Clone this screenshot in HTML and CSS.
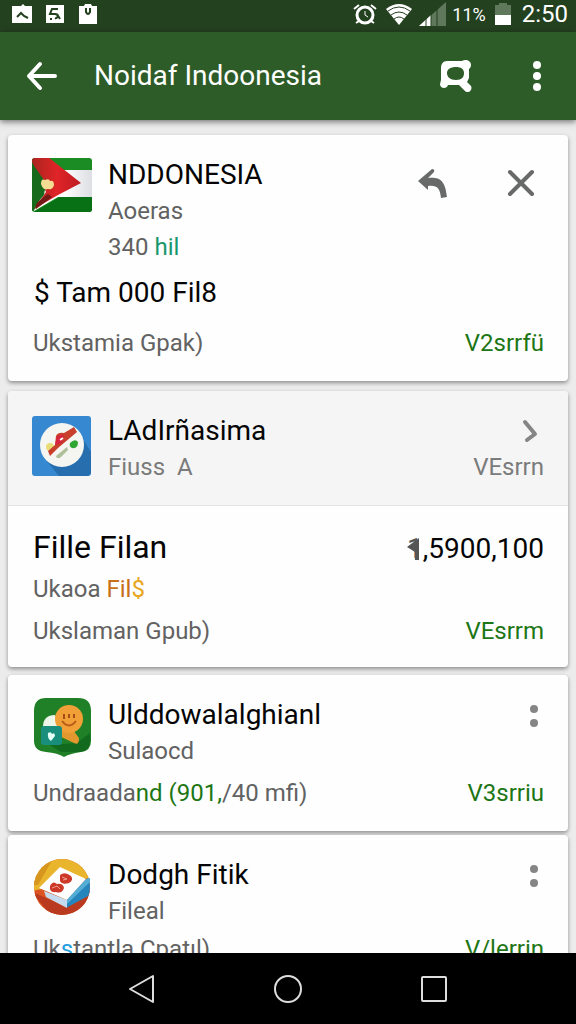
FILE: index.html
```
<!DOCTYPE html>
<html lang="id">
<head>
<meta charset="utf-8">
<meta name="viewport" content="width=device-width, initial-scale=1">
<title>Noidaf Indoonesia</title>
<link rel="stylesheet" href="styles.css">
</head>
<body>
<div class="status">
  <div class="status-group notices">
    <svg width="20" height="20" viewBox="0 0 20 20"><path fill="#fff" d="M0 2h9l2-2 2 2h7v17H0z"/><path d="M5 13l4-4 3 3 4 2" fill="none" stroke="#23401f" stroke-width="2"/></svg>
    <svg width="20" height="20" viewBox="0 0 20 20"><path fill="#fff" d="M1 1h18v18H1z"/><path d="M13 5H7L5 10h5c4 0 3 5 0 4M12 10l3 5M5 15h2" fill="none" stroke="#23401f" stroke-width="2"/></svg>
    <svg width="20" height="20" viewBox="0 0 20 20"><path fill="#fff" d="M1 2h5l1-2h6l1 2h5v18H1z"/><path d="M8 4v4q2 4 4 0V4" fill="none" stroke="#23401f" stroke-width="2"/></svg>
  </div>
  <div class="status-group">
    <svg class="alarm" width="24" height="22" viewBox="0 0 24 22"><g fill="none" stroke="#fff" stroke-width="2"><circle cx="12" cy="12" r="8" stroke-width="3"/><path d="M1 6l5-4M23 6l-5-4M6 18l-3 2M18 18l3 2"/><path d="M12 8v4l3 2" stroke-width="1"/></g></svg>
    <svg class="wifi" width="28" height="22" viewBox="0 0 28 22"><path fill="#fff" d="M14 22L1 6Q14-4 27 6z"/><path d="M3 8q11-8 22 0M6 12q8-6 16 0M9 16q5-4 10 0" fill="none" stroke="#23401f" stroke-width="1"/></svg>
    <svg class="signal" width="27" height="24" viewBox="0 0 27 24"><path fill="#5f785b" d="M27 0v24H0z"/><path fill="#fff" d="M12 13v11H0z"/><path d="M7 16v8M12 12v12M18 6v18" stroke="#23401f"/></svg>
    <span class="percent">11%</span>
    <svg class="battery" width="18" height="22" viewBox="0 0 18 22"><path fill="#5f785b" d="M1 2h4V0h8v2h4v10H1z"/><path fill="#fff" d="M1 12h16v10H1z"/></svg>
    <span class="clock">2:50</span>
  </div>
</div>
<header class="appbar">
  <button class="icon-button" aria-label="Back"><svg width="32" height="30" viewBox="0 0 32 30"><path d="M14 3L3 15l11 12M3 15h26" fill="none" stroke="#fff" stroke-width="4" stroke-linecap="round" stroke-linejoin="round"/></svg></button>
  <h1 class="title">Noidaf Indoonesia</h1>
  <button class="icon-button" aria-label="Search"><svg width="32" height="32" viewBox="0 0 32 32"><path fill="#fff" fill-rule="evenodd" d="M7 1h15c3-2 9-1 9 4 0 2-1 3-2 4v9l-2 4 4 4c2 4-3 8-6 5l-6-6H8c-1 4-8 4-8-1l1-4V8c0-4 2-7 6-7zM7 13c0 4 3 7 9 7s8-3 8-7-3-6-8-6-9 2-9 6z"/></svg></button>
  <button class="icon-button" aria-label="More options"><svg width="10" height="32" viewBox="0 0 10 32" fill="#fff"><circle cx="5" cy="5" r="4"/><circle cx="5" cy="16" r="4"/><circle cx="5" cy="27" r="4"/></svg></button>
</header>
<main class="list">
  <article class="card">
    <div class="head">
      <svg class="logo" width="60" height="60" viewBox="0 0 60 60">
        <defs><clipPath id="flag"><rect width="60" height="54" y="1" rx="3"/></clipPath><linearGradient id="red"><stop offset="0" stop-color="#a92520"/><stop offset=".5" stop-color="#e02427"/><stop offset="1" stop-color="#bd1b22"/></linearGradient><linearGradient id="white"><stop offset=".5" stop-color="#fff"/><stop offset="1" stop-color="#dcdde2"/></linearGradient></defs>
        <g clip-path="url(#flag)"><path fill="#1b8b23" d="M0 0h61v58H0z"/><path fill="url(#white)" d="M25 13h36v27H26L2 54v-4z"/><path fill="#176a1b" d="M0 0l5 7 1 42-6 6z"/><path fill="#087015" d="M2 55l26-15h33v18H0z"/><path fill="url(#red)" d="M0 0h16l33 26L26 38 2 52l12-17L0 5z"/><path fill="#741915" d="M4 46l12-9 4 3L4 52z"/><path fill="#176a1b" d="M0 6l14 20-2 12L0 52z"/><path fill="#f4dc93" d="M9 27q0-6 4-4 4-2 5 1 4-1 4 4-1 5-6 4-5 2-7-5z"/></g>
      </svg>
      <div class="names"><h2 class="name">NDDONESIA</h2><p class="sub">Aoeras</p><p class="sub">340 <span class="teal">hil</span></p></div>
      <div class="actions">
        <button class="icon-button" aria-label="Reply"><svg width="32" height="32" viewBox="0 0 32 32"><path fill="#686a69" d="M15 2q3 0 2 3l-6 6c11-1 17 1 19 19l-6 1c-1-10-4-13-13-12v4L1 14z"/></svg></button>
        <button class="icon-button" aria-label="Close"><svg width="28" height="28" viewBox="0 0 28 28"><path d="M3 3l22 22M25 3L3 25" stroke="#686a69" stroke-width="4" stroke-linecap="round"/></svg></button>
      </div>
    </div>
    <p class="amount lead">$ Tam 000 Fil8</p>
    <div class="row first"><span>Ukstamia Gpak)</span><a class="link" href="#">V2srrfü</a></div>
  </article>

  <article class="card second">
    <div class="head shaded">
      <svg class="logo" width="60" height="60" viewBox="0 0 60 60"><rect width="59" height="60" rx="3" fill="#3688d1"/><path fill="#266ead" d="M14 44l13 16h29l3-3V36L48 18z"/><circle cx="30" cy="29" r="22" fill="#f5f5f2"/><circle cx="18" cy="31" r="4" fill="#eadc77"/><path fill="#c8402b" d="M24 20q2-4 8-3l10-6 3 5-19 16-8 8-2-5 7-6z"/><path fill="#d8233e" d="M25 20l7-1-2 8-7 2z"/><path d="M28 24l3-2" stroke="#fff" stroke-width="2"/><path fill="#aebf9a" d="M35 31l-11 9q1 4 5 1l7-7z"/><path fill="#30a735" d="M38 27q5-5 8-1 0 7-6 6-3-1-2-5z"/></svg>
      <div class="names"><h2 class="name">LAdIrñasima</h2><p class="sub muted">Fiuss&nbsp; A</p></div>
      <div class="side"><button class="icon-button chevron" aria-label="Open"><svg width="18" height="26" viewBox="0 0 18 26"><path d="M4 4l10 12-8 6" fill="none" stroke="#858585" stroke-width="4" stroke-linecap="round" stroke-linejoin="round"/></svg></button><span class="muted">VEsrrn</span></div>
    </div>
    <div class="detail">
      <div class="row amount"><strong class="strong">Fille Filan</strong><span><span class="flagged">1<svg class="wedge" width="12" height="22" viewBox="0 0 12 22"><path fill="#555" d="M0 9L12 0v22H8v-8z"/></svg></span>,5900,100</span></div>
      <p class="row">Ukaoa&nbsp;<span class="orange">Fil<span class="gold">$</span></span></p>
      <div class="row last"><span>Ukslaman Gpub)</span><a class="link" href="#">VEsrrm</a></div>
    </div>
  </article>

  <article class="card third">
    <div class="head">
      <svg class="logo" width="60" height="60" viewBox="0 0 60 60"><path fill="#208027" d="M14 1h32q13 0 13 13v30q0 10-10 11-12 2-17 5-6-4-18-5Q2 54 2 44V14Q2 1 14 1z"/><path fill="#126a1e" d="M18 48l27-2 13-10v8q0 10-10 11H29z"/><path fill="#edf7e9" d="M11 30q0-12 12-12l6 14z"/><path fill="#e2982e" d="M28 30L41 33l6 8q0 8-5 5L27 39z"/><circle cx="37" cy="22" r="14" fill="#f0a036"/><path d="M32 17v5M37 17v4M42 17v4" stroke="#a44d16" stroke-width="2"/><path d="M30 24q7 9 14 0" stroke="#b95a19" stroke-width="2" fill="none"/><rect x="9" y="29" width="21" height="19" rx="3" fill="#198e7c"/><path fill="#e3fff7" d="M16 36q3-2 4 1 3-2 3 2l-4 5q-4-3-3-8z"/></svg>
      <div class="names"><h2 class="name">Ulddowalalghianl</h2><p class="sub">Sulaocd</p></div>
      <button class="icon-button dots" aria-label="Options"><svg width="10" height="24" viewBox="0 0 10 24" fill="#858585"><circle cx="5" cy="5" r="4"/><circle cx="5" cy="19" r="4"/></svg></button>
    </div>
    <div class="row spaced"><span>Undraada<span class="green">nd (901,</span>/40 mfi)</span><a class="link" href="#">V3srriu</a></div>
  </article>

  <article class="card fourth">
    <div class="head">
      <svg class="logo" width="60" height="60" viewBox="0 0 60 60"><defs><clipPath id="disc"><circle cx="30" cy="30" r="28"/></clipPath></defs><g clip-path="url(#disc)"><path fill="#dc5422" d="M0 0h60v60H0z"/><path fill="#e9b52c" d="M0 0h60v20l-30 8L0 34z"/><path fill="#d7961d" d="M0 0h22L6 28H0z"/><path fill="#b93a1e" d="M0 35l35 15 24-18v28H20z"/><path fill="#2785bd" d="M35 41l25-23v19L34 51z"/><path fill="#c5dcf0" d="M12 34l23 9v8L14 40z"/></g><path fill="#fff" d="M7 31L28 10l26 12-19 21z"/><path fill="#53add5" d="M35 43l19-21 4-1v4L35 47z"/><path fill="#cd3929" d="M28 18q5-4 11 1 3 4-2 7-7 2-9-2zM18 29q3-6 7-2 6-1 7 4-2 6-8 4-7 1-6-6z"/><path d="M30 20l5 2-4 1M20 31l5-2 3 3" fill="none" stroke="#f1a08f"/></svg>
      <div class="names"><h2 class="name">Dodgh Fitik</h2><p class="sub">Fileal</p></div>
      <button class="icon-button dots" aria-label="Options"><svg width="10" height="24" viewBox="0 0 10 24" fill="#858585"><circle cx="5" cy="5" r="4"/><circle cx="5" cy="19" r="4"/></svg></button>
    </div>
    <div class="row"><span>Uk<span class="blue">s</span>tantla Cpatıl)</span><a class="link" href="#">V/lerrin</a></div>
  </article>
</main>
<nav class="navbar" aria-label="System">
  <button class="icon-button" aria-label="Back"><svg width="32" height="32" viewBox="0 0 32 32"><path d="M27 3v26L4 16z" fill="none" stroke="#ddd" stroke-width="2" stroke-linejoin="round"/></svg></button>
  <button class="icon-button" aria-label="Home"><svg width="32" height="32" viewBox="0 0 32 32"><circle cx="16" cy="16" r="13" fill="none" stroke="#ddd" stroke-width="2"/></svg></button>
  <button class="icon-button" aria-label="Recent"><svg width="32" height="32" viewBox="0 0 32 32"><rect x="4" y="4" width="24" height="24" rx="1" fill="none" stroke="#ddd" stroke-width="2"/></svg></button>
</nav>
</body>
</html>
```
FILE: styles.css
```
* { box-sizing: border-box; }
body {
  margin: 0;
  height: 100vh;
  display: flex;
  flex-direction: column;
  background: #ececec;
  color: #626262;
  font-family: Roboto, "Noto Sans", sans-serif;
  font-size: 24px;
}
h1, h2, p { margin: 0; font-weight: 400; }
svg { display: block; flex: none; }
.icon-button { display: flex; padding: 0; border: 0; background: none; }
.status {
  display: flex;
  justify-content: space-between;
  flex: none;
  height: 32px;
  padding: 0 8px 4px 12px;
  background: #23401f;
  color: #fff;
}
.status-group { display: flex; align-items: center; gap: 6px; }
.notices { gap: 13px; }
.wifi, .battery { margin-left: 2px; }
.percent { font-size: 18px; }
.clock { margin-left: 4px; font-size: 24px; }
.appbar {
  display: flex;
  align-items: center;
  flex: none;
  height: 88px;
  padding: 0 34px 0 26px;
  background: #2d5c28;
  color: #fff;
  box-shadow: 0 2px 6px rgba(0, 0, 0, .5);
  z-index: 1;
}
.title { flex: 1; margin-left: 36px; font-size: 28px; line-height: 40px; }
.appbar .icon-button:last-child { margin-left: 60px; }
.list { flex: 1; min-height: 0; overflow: hidden; padding: 15px 8px 0; }
.card {
  border-radius: 4px;
  background: #fefefe;
  box-shadow: 0 2px 4px rgba(0, 0, 0, .4);
  padding-bottom: 16px;
}
.second { margin-top: 10px; }
.third { margin-top: 8px; padding-bottom: 18px; }
.fourth { margin-top: 4px; }
.head { display: flex; align-items: flex-start; gap: 16px; padding: 22px 24px 0; }
.shaded { padding-bottom: 20px; border-bottom: 1px solid #e4e4e4; border-radius: 4px 4px 0 0; background: #f5f5f5; }
.second .logo { margin-top: 3px; }
.names { flex: 1; min-width: 0; }
.name { color: #050505; font-size: 28px; line-height: 36px; white-space: nowrap; }
.sub { line-height: 36px; }
.muted { color: #7b7b7b; }
.teal { color: #16976c; }
.actions { display: flex; align-items: center; gap: 58px; padding: 10px 9px 0 0; }
.amount { color: #050505; font-size: 28px; }
.lead { padding: 0 24px 0 26px; line-height: 56px; }
.row { display: flex; justify-content: space-between; align-items: baseline; padding: 0 24px 0 25px; line-height: 40px; white-space: nowrap; }
.first { padding-top: 2px; padding-bottom: 2px; }
.spaced { padding-top: 4px; }
.last { padding-top: 2px; }
.link { color: #1d7615; text-decoration: none; }
.side { display: flex; flex-direction: column; align-items: flex-end; line-height: 36px; }
.chevron { height: 36px; align-items: center; padding-right: 5px; }
.detail { padding-top: 21px; }
.strong { font-size: 32px; font-weight: 400; }
.flagged { position: relative; color: #555; }
.wedge { position: absolute; left: 0; top: 6px; }
.orange { margin-right: auto; color: #c87019; }
.gold { color: #e7a720; }
.green { color: #1d7615; }
.blue { color: #239ce0; }
.dots { padding: 7px 5px 0 0; }
.navbar {
  display: flex;
  justify-content: center;
  align-items: center;
  gap: 114px;
  flex: none;
  height: 71px;
  background: #000;
  z-index: 1;
}
```
